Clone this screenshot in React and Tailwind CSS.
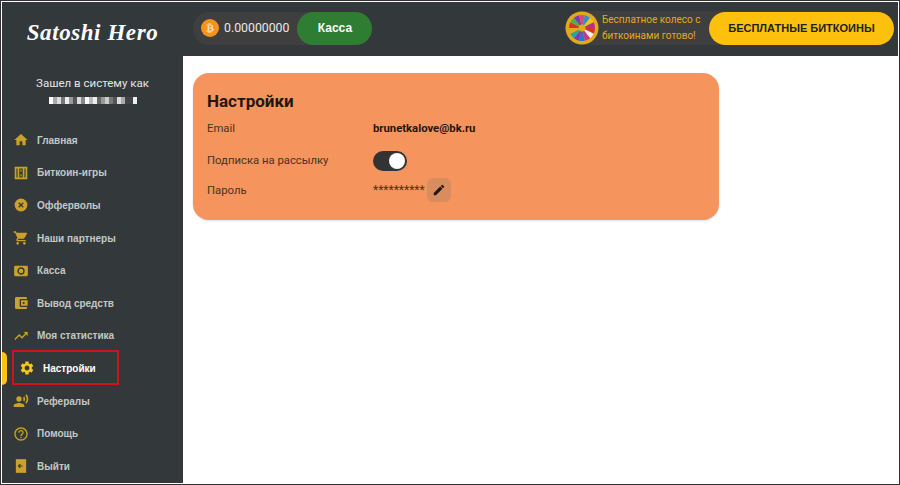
import { FaBtc } from "react-icons/fa";
import {
  MdHome,
  MdShoppingCart,
  MdTrendingUp,
  MdHelpOutline,
  MdSettings,
  MdEdit,
  MdAccountBalanceWallet,
  MdRecordVoiceOver,
} from "react-icons/md";

const IconGames = () => (
  <svg width="16" height="16" viewBox="0 0 14 14" fill="#c9a227">
    <path fillRule="evenodd" d="M1.5 1.5h11v11h-11zM3 3v8h1V3zm7 0v8h1V3zM5.5 3v8h3V3zM6.5 4h1v2h-1zM6.5 8h1v2h-1z" />
  </svg>
);
const IconOffer = () => (
  <svg width="16" height="16" viewBox="0 0 14 14">
    <circle cx="7" cy="7" r="5.6" fill="#c9a227" />
    <path d="M5 5l4 4M9 5l-4 4" stroke="#33393a" strokeWidth="1.1" />
  </svg>
);
const IconCash = () => (
  <svg width="16" height="16" viewBox="0 0 14 14">
    <rect x="1" y="2.5" width="12" height="9" rx="1" fill="#c9a227" />
    <circle cx="7" cy="7" r="2.6" fill="none" stroke="#33393a" strokeWidth="1.2" />
  </svg>
);
const IconExit = () => (
  <svg width="16" height="16" viewBox="0 0 14 14">
    <rect x="2.5" y="1" width="9" height="12" fill="#c9a227" />
    <path d="M8.5 7H4.8M6.4 5.4L4.8 7l1.6 1.6" fill="none" stroke="#33393a" strokeWidth="1" />
  </svg>
);

const gold = { size: 16, color: "#c9a227" };
const menu = [
  { label: "Главная", icon: <MdHome {...gold} /> },
  { label: "Биткоин-игры", icon: <IconGames /> },
  { label: "Офферволы", icon: <IconOffer /> },
  { label: "Наши партнеры", icon: <MdShoppingCart {...gold} /> },
  { label: "Касса", icon: <IconCash /> },
  { label: "Вывод средств", icon: <MdAccountBalanceWallet {...gold} /> },
  { label: "Моя статистика", icon: <MdTrendingUp {...gold} /> },
  { label: "Настройки", active: true, icon: <MdSettings size={16} color="#fdc513" /> },
  { label: "Рефералы", icon: <MdRecordVoiceOver {...gold} /> },
  { label: "Помощь", icon: <MdHelpOutline {...gold} /> },
  { label: "Выйти", icon: <IconExit /> },
];

const wheelColors = ["#d8322c", "#f0f0f0", "#d0318a", "#2a77c9", "#7a3bb5", "#1fa7a0", "#e6a61e", "#d8322c", "#4db04a", "#7a3bb5", "#e0457a", "#2f8fd0", "#f2c21e", "#b52f8f"];

function Wheel() {
  const step = (2 * Math.PI) / wheelColors.length;
  return (
    <svg width="34" height="34" viewBox="0 0 34 34" className="shrink-0">
      <circle cx="17" cy="17" r="16.5" fill="#e3a91d" />
      {wheelColors.map((c, i) => {
        const a = i * step;
        const b = (i + 1) * step;
        return (
          <path
            key={i}
            d={`M17 17L${17 + 13 * Math.cos(a)} ${17 + 13 * Math.sin(a)}A13 13 0 0 1 ${17 + 13 * Math.cos(b)} ${17 + 13 * Math.sin(b)}Z`}
            fill={c}
          />
        );
      })}
      <circle cx="17" cy="17" r="3.5" fill="#e3a91d" />
    </svg>
  );
}

const pixels = ["#fff", "#aaa", "#ddd", "#777", "#eee", "#999", "#555", "#ddd", "#888", "#fff", "#bbb", "#eee", "#666", "#999", "#ccc", "#777", "#555", "#ddd", "#aaa", "#444", "#444", "#eee"];

export default function App() {
  return (
    <div className="w-[900px] h-[485px] border border-[#333] font-['Roboto',sans-serif] overflow-hidden">
      <div className="h-full bg-white border border-white flex">
        <aside className="w-[181px] shrink-0 bg-[#33393a] flex flex-col">
          <div className="h-[54px] flex items-center justify-center pt-[9px] font-['Liberation_Serif',serif] italic font-bold text-[23px] tracking-wide text-white">
            Satoshi Hero
          </div>
          <div className="mt-[19px] flex flex-col items-center text-[11.5px] leading-4 text-[#e4e4e4]">
            <p>Зашел в систему как</p>
            <div className="flex mt-[6px] h-[7px]">
              {pixels.map((c, i) => (
                <span key={i} className="w-1 h-full" style={{ backgroundColor: c }} />
              ))}
            </div>
          </div>
          <nav className="mt-5 flex flex-col font-['Liberation_Sans',sans-serif] font-bold text-[10px]">
            {menu.map((item) => (
              <a
                key={item.label}
                href="#"
                className={
                  item.active
                    ? "relative h-[32.6px] flex items-center gap-2 pl-[17px] text-white"
                    : "h-[32.6px] flex items-center gap-2 pl-[11px] text-[#c4c7c7]"
                }
              >
                {item.active && (
                  <>
                    <span className="absolute left-0 top-0 w-[5px] h-full rounded-r-md bg-[#fdc513]" />
                    <span className="absolute left-[10px] top-[-2px] w-[107px] h-[35px] border-2 border-[#d0121b]" />
                  </>
                )}
                {item.icon}
                <span>{item.label}</span>
              </a>
            ))}
          </nav>
        </aside>

        <div className="flex-1 min-w-0 flex flex-col">
          <header className="h-[54px] shrink-0 bg-[#33393a] flex items-center justify-between pl-[10px] pr-1 pb-[2px]">
            <div className="h-[33px] rounded-full bg-[#403f40] flex items-center pl-2 text-[12.3px] text-[#e8e8e8]">
              <span className="w-[18px] h-[18px] rounded-full bg-[#f7931a] flex items-center justify-center">
                <FaBtc size={10} color="#f6d9ae" />
              </span>
              <span className="ml-[5px] mr-2">0.00000000</span>
              <button className="w-[75px] h-[33px] rounded-full bg-[#2e7d32] text-white font-['Liberation_Sans',sans-serif] font-bold text-[12px]">
                Касса
              </button>
            </div>
            <div className="h-[34px] rounded-full bg-[#403f40] flex items-center gap-[3px] text-[10px] leading-4 text-[#e3a91d]">
              <Wheel />
              <p className="w-[104px]">Бесплатное колесо с биткоинами готово!</p>
              <button className="w-[185px] h-[33px] rounded-full bg-[#fdc10d] text-[#1e1e1e] font-['Liberation_Sans',sans-serif] font-bold text-[11px]">
                БЕСПЛАТНЫЕ БИТКОИНЫ
              </button>
            </div>
          </header>

          <main className="flex-1 pt-[17px] pl-[10px]">
            <section className="w-[526px] h-[147px] rounded-2xl bg-[#f5945d] shadow-sm px-[14px] pt-[18px] text-[11.3px] text-[#4a3324]">
              <h1 className="text-[17px] leading-5 font-bold text-[#1f1712]">Настройки</h1>
              <div className="mt-[10px] flex flex-col">
                <div className="flex items-center h-[17px]">
                  <span className="w-[166px]">Email</span>
                  <span className="font-bold text-[#1f1712]">brunetkalove@bk.ru</span>
                </div>
                <div className="flex items-center h-[20px] mt-[13px]">
                  <span className="w-[166px]">Подписка на рассылку</span>
                  <span className="w-[34px] h-[20px] rounded-full bg-[#333] flex items-center justify-end pr-[2px]">
                    <span className="w-4 h-4 rounded-full bg-white" />
                  </span>
                </div>
                <div className="flex items-center h-[24px] mt-[7px]">
                  <span className="w-[166px] pt-[2px]">Пароль</span>
                  <span className="text-[12px]">**********</span>
                  <span className="ml-[2px] w-6 h-6 rounded-md bg-[#d98d5f] flex items-center justify-center">
                    <MdEdit size={14} color="#1f1712" />
                  </span>
                </div>
              </div>
            </section>
          </main>
        </div>
      </div>
    </div>
  );
}
